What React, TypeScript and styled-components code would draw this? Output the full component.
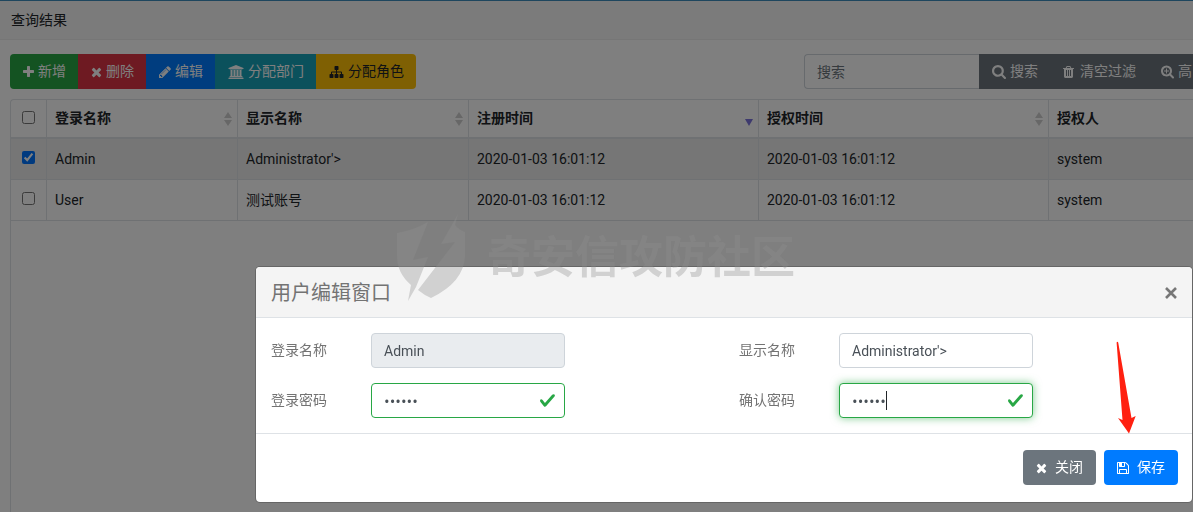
import React from "react";
import styled, { createGlobalStyle, css } from "styled-components";

const Global = createGlobalStyle`
  *, *::before, *::after { box-sizing: border-box; }
  html, body { margin: 0; height: 100%; }
  #root { height: 100%; }
  body, button, input {
    font-family: Roboto, "Noto Sans CJK SC", sans-serif;
    font-size: 14px;
    line-height: 21px;
  }
  body { color: #212529; background: #fff; overflow: hidden; }
`;

const ICONS = {
  plus: "M1600 736v192q0 40-28 68t-68 28h-416v416q0 40-28 68t-68 28h-192q-40 0-68-28t-28-68v-416h-416q-40 0-68-28t-28-68v-192q0-40 28-68t68-28h416v-416q0-40 28-68t68-28h192q40 0 68 28t28 68v416h416q40 0 68 28t28 68z",
  times: "M1490 1322q0 40-28 68l-136 136q-28 28-68 28t-68-28l-294-294-294 294q-28 28-68 28t-68-28l-136-136q-28-28-28-68t28-68l294-294-294-294q-28-28-28-68t28-68l136-136q28-28 68-28t68 28l294 294 294-294q28-28 68-28t68 28l136 136q28 28 28 68t-28 68l-294 294 294 294q28 28 28 68z",
  pencil: "M491 1536l91-91-235-235-91 91v107h128v128h107zm523-928q0-22-22-22-10 0-17 7l-542 542q-7 7-7 17 0 22 22 22 10 0 17-7l542-542q7-7 7-17zm-54-192l416 416-832 832h-416v-416zm683 96q0 53-37 90l-166 166-416-416 166-165q36-38 90-38 53 0 91 38l235 234q37 39 37 91z",
  university: "M960 0l960 384v128h-128q0 26-20.5 45t-48.5 19h-1526q-28 0-48.5-19t-20.5-45h-128v-128zm-704 640h256v768h128v-768h256v768h128v-768h256v768h128v-768h256v768h59q28 0 48.5 19t20.5 45v64h-1664v-64q0-26 20.5-45t48.5-19h59v-768zm1595 960q28 0 48.5 19t20.5 45v128h-1920v-128q0-26 20.5-45t48.5-19h1782z",
  sitemap: "M1792 1248v320q0 40-28 68t-68 28h-320q-40 0-68-28t-28-68v-320q0-40 28-68t68-28h96v-192h-512v192h96q40 0 68 28t28 68v320q0 40-28 68t-68 28h-320q-40 0-68-28t-28-68v-320q0-40 28-68t68-28h96v-192h-512v192h96q40 0 68 28t28 68v320q0 40-28 68t-68 28h-320q-40 0-68-28t-28-68v-320q0-40 28-68t68-28h96v-192q0-52 38-90t90-38h512v-192h-96q-40 0-68-28t-28-68v-320q0-40 28-68t68-28h320q40 0 68 28t28 68v320q0 40-28 68t-68 28h-96v192h512q52 0 90 38t38 90v192h96q40 0 68 28t28 68z",
  search: "M1216 832q0-185-131.5-316.5t-316.5-131.5-316.5 131.5-131.5 316.5 131.5 316.5 316.5 131.5 316.5-131.5 131.5-316.5zm512 832q0 52-38 90t-90 38q-54 0-90-38l-343-342q-179 124-399 124-143 0-273.5-55.5t-225-150-150-225-55.5-273.5 55.5-273.5 150-225 225-150 273.5-55.5 273.5 55.5 225 150 150 225 55.5 273.5q0 220-124 399l343 343q37 37 37 90z",
  zoomIn: "M1088 800v64q0 13-9.5 22.5t-22.5 9.5h-224v224q0 13-9.5 22.5t-22.5 9.5h-64q-13 0-22.5-9.5t-9.5-22.5v-224h-224q-13 0-22.5-9.5t-9.5-22.5v-64q0-13 9.5-22.5t22.5-9.5h224v-224q0-13 9.5-22.5t22.5-9.5h64q13 0 22.5 9.5t9.5 22.5v224h224q13 0 22.5 9.5t9.5 22.5z M1216 832q0-185-131.5-316.5t-316.5-131.5-316.5 131.5-131.5 316.5 131.5 316.5 316.5 131.5 316.5-131.5 131.5-316.5zm512 832q0 52-38 90t-90 38q-54 0-90-38l-343-342q-179 124-399 124-143 0-273.5-55.5t-225-150-150-225-55.5-273.5 55.5-273.5 150-225 225-150 273.5-55.5 273.5 55.5 225 150 150 225 55.5 273.5q0 220-124 399l343 343q37 37 37 90z",
  trash: "M704 1376v-704q0-14-9-23t-23-9h-64q-14 0-23 9t-9 23v704q0 14 9 23t23 9h64q14 0 23-9t9-23zm256 0v-704q0-14-9-23t-23-9h-64q-14 0-23 9t-9 23v704q0 14 9 23t23 9h64q14 0 23-9t9-23zm256 0v-704q0-14-9-23t-23-9h-64q-14 0-23 9t-9 23v704q0 14 9 23t23 9h64q14 0 23-9t9-23zm-544-992h448l-48-117q-7-9-17-11h-317q-10 2-17 11zm928 32v64q0 14-9 23t-23 9h-96v948q0 83-47 143.5t-113 60.5h-832q-66 0-113-58.5t-47-141.5v-952h-96q-14 0-23-9t-9-23v-64q0-14 9-23t23-9h309l70-167q15-37 54-63t79-26h320q40 0 79 26t54 63l70 167h309q14 0 23 9t9 23z",
  save: "M512 1536h768v-384h-768v384zm896 0h128v-896q0-14-10-38.5t-20-34.5l-281-281q-10-10-34-20t-39-10v416q0 40-28 68t-68 28h-576q-40 0-68-28t-28-68v-416h-128v1280h128v-416q0-40 28-68t68-28h832q40 0 68 28t28 68v416zm-384-928v-320q0-13-9.5-22.5t-22.5-9.5h-192q-13 0-22.5 9.5t-9.5 22.5v320q0 13 9.5 22.5t22.5 9.5h192q13 0 22.5-9.5t9.5-22.5zm640 32v928q0 40-28 68t-68 28h-1344q-40 0-68-28t-28-68v-1344q0-40 28-68t68-28h928q40 0 88 20t76 48l280 280q28 28 48 76t20 88z",
};

const VIEW_BOXES: Partial<Record<keyof typeof ICONS, string>> = {
  plus: "192 0 1408 1792",
  times: "302 0 1188 1792",
  pencil: "128 0 1536 1792",
  university: "0 0 1920 1792",
  search: "64 128 1664 1664",
  zoomIn: "64 128 1664 1664",
  trash: "192 0 1408 1792",
  save: "128 0 1536 1792",
};

const Glyph = styled.svg`
  display: block;
  flex: none;
  height: 14px;
  fill: currentColor;
`;

function Icon({ name, width = 14 }: { name: keyof typeof ICONS; width?: number }) {
  return (
    <Glyph viewBox={VIEW_BOXES[name] ?? "0 0 1792 1792"} width={width} aria-hidden="true">
      <path d={ICONS[name]} />
    </Glyph>
  );
}

const Page = styled.main`
  display: flex;
  flex-direction: column;
  min-height: 100%;
  border-top: 1px solid #3c8dbc;
`;

const PanelHeader = styled.h1`
  margin: 0;
  padding: 9px 11px 8px;
  font-size: 14px;
  font-weight: 400;
  background: #f7f7f7;
  border-bottom: 1px solid #ececec;
`;

const PanelBody = styled.section`
  display: flex;
  flex: 1;
  flex-direction: column;
  gap: 10px;
  padding: 14px 0 0 10px;
`;

const Toolbar = styled.div`
  display: flex;
  justify-content: space-between;
`;

const Group = styled.div`
  display: flex;
  flex: none;
  border-radius: 4px;
  overflow: hidden;
`;

const SearchGroup = styled.form`
  display: flex;
  flex: none;
  width: 389px;
  overflow: hidden;
`;

const tones = {
  success: "#28a745",
  danger: "#dc3545",
  primary: "#007bff",
  info: "#17a2b8",
  warning: "#ffc107",
  secondary: "#6c757d",
};

const Button = styled.button<{ $tone: keyof typeof tones; $gap?: number; $round?: boolean }>`
  display: flex;
  flex: none;
  align-items: center;
  gap: ${(p) => p.$gap ?? 4}px;
  height: 35px;
  padding: 0 ${(p) => (p.$round ? 13 : 12)}px 0 13px;
  border: 0;
  border-radius: ${(p) => (p.$round ? 4 : 0)}px;
  color: ${(p) => (p.$tone === "warning" ? "#212529" : "#fff")};
  background: ${(p) => tones[p.$tone]};
  white-space: nowrap;
`;

const fieldBase = css`
  height: 35px;
  padding: 6px 12px;
  border: 1px solid #ced4da;
  border-radius: 4px;
  color: #495057;
  background: #fff;
  outline: 0;
`;

const SearchInput = styled.input`
  ${fieldBase}
  flex: none;
  width: 175px;
  border-right: 0;
  border-radius: 4px 0 0 4px;
  &::placeholder { color: #6c757d; opacity: 1; }
`;

const TableFrame = styled.div`
  flex: 1;
  border: 1px solid #dee2e6;
  border-right: 0;
  border-bottom: 0;
  border-radius: 4px 0 0 0;
`;

const Table = styled.table`
  width: 100%;
  table-layout: fixed;
  border-collapse: separate;
  border-spacing: 0;
`;

const Column = styled.col<{ $width?: number }>`
  width: ${(p) => (p.$width ? `${p.$width}px` : "auto")};
`;

const cell = css`
  padding: 0 8px;
  border-right: 1px solid #dee2e6;
  border-bottom: 1px solid #dee2e6;
  text-align: left;
  white-space: nowrap;
  &:last-child { border-right: 0; }
`;

const Th = styled.th`
  ${cell}
  height: 39px;
  border-bottom-width: 2px;
  font-weight: 700;
`;

const ThInner = styled.div`
  display: flex;
  align-items: center;
  justify-content: space-between;
  margin-right: -4px;
`;

const Td = styled.td`
  ${cell}
  height: 41px;
`;

const Row = styled.tr<{ $selected?: boolean }>`
  background: ${(p) => (p.$selected ? "#ececec" : "transparent")};
`;

const Check = styled.input`
  display: block;
  width: 13px;
  height: 13px;
  margin: 0 0 3px 3px;
`;

const SortMark = styled.svg`
  display: block;
  width: 10px;
  height: 16px;
`;

function Sort({ active }: { active?: boolean }) {
  return (
    <SortMark viewBox="0 0 10 16" aria-hidden="true">
      {active ? (
        <path d="M1 8h8L5 15z" fill="#7c74dc" />
      ) : (
        <path d="M1 7h8L5 1z M1 9h8L5 15z" fill="#cfcfcf" />
      )}
    </SortMark>
  );
}

const Backdrop = styled.div`
  position: fixed;
  inset: 0;
  padding: 266px 0 0 255px;
  background: rgba(0, 0, 0, 0.5);
`;

const Dialog = styled.section`
  display: flex;
  flex-direction: column;
  border: 1px solid rgba(0, 0, 0, 0.2);
  border-radius: 5px;
  background: #fff;
  background-clip: padding-box;
  color: #737373;
`;

const DialogHeader = styled.header`
  display: flex;
  align-items: center;
  justify-content: space-between;
  height: 51px;
  padding: 1px 14px 0 15px;
  border-bottom: 1px solid #dee2e6;
  border-radius: 4px 4px 0 0;
  background: #f4f4f4;
`;

const DialogTitle = styled.h2`
  margin: 0;
  font-size: 20px;
  line-height: 30px;
  font-weight: 400;
`;

const CloseButton = styled.button`
  display: flex;
  padding: 1px;
  border: 0;
  color: #777;
  background: none;
`;

const FormGrid = styled.form`
  display: grid;
  grid-template-columns: 1fr 1fr;
  row-gap: 15px;
  padding: 15px 0;
`;

const Field = styled.div`
  display: grid;
  grid-template-columns: 100px 194px;
  align-items: center;
  padding-left: 15px;
`;

const Control = styled.span`
  position: relative;
  display: flex;
`;

const Input = styled.input<{ $valid?: boolean; $focused?: boolean }>`
  ${fieldBase}
  width: 100%;
  &:disabled { background: #e9ecef; }
  &[type="password"] {
    font-family: "Open Sans", sans-serif;
    font-size: 15px;
  }
  ${(p) => p.$valid && css`border-color: #28a745;`}
  ${(p) => p.$focused && css`box-shadow: 0 0 8px rgba(40, 167, 69, 0.6);`}
`;

const ValidMark = styled.svg`
  position: absolute;
  top: 9px;
  right: 9px;
  width: 17px;
  height: 17px;
`;

const Caret = styled.i`
  position: absolute;
  top: 8px;
  left: 47px;
  width: 1px;
  height: 19px;
  background: #212529;
`;

const DialogFooter = styled.footer`
  display: flex;
  justify-content: flex-end;
  gap: 8px;
  padding: 16px 14px 17px;
  border-top: 1px solid #dee2e6;
`;

const Watermark = styled.div`
  position: fixed;
  top: 214px;
  left: 396px;
  display: flex;
  align-items: center;
  gap: 21px;
  color: rgba(142, 142, 142, 0.35);
  font-size: 44px;
  line-height: 60px;
  font-weight: 700;
  pointer-events: none;
`;

const Arrow = styled.svg`
  position: fixed;
  top: 341px;
  right: 57px;
  width: 22px;
  height: 93px;
  pointer-events: none;
`;

const rows = [
  { login: "Admin", name: "Administrator'>", created: "2020-01-03 16:01:12", granted: "2020-01-03 16:01:12", by: "system", selected: true },
  { login: "User", name: "测试账号", created: "2020-01-03 16:01:12", granted: "2020-01-03 16:01:12", by: "system", selected: false },
];

const fields = [
  { id: "login", label: "登录名称", value: "Admin", disabled: true },
  { id: "display", label: "显示名称", value: "Administrator'>" },
  { id: "password", label: "登录密码", value: "123456", secret: true },
  { id: "confirm", label: "确认密码", value: "123456", secret: true, focused: true },
];

export default function App() {
  return (
    <>
      <Global />
      <Page>
        <PanelHeader>查询结果</PanelHeader>
        <PanelBody>
          <Toolbar>
            <Group>
              <Button $tone="success"><Icon name="plus" width={11} />新增</Button>
              <Button $tone="danger"><Icon name="times" width={11} />删除</Button>
              <Button $tone="primary"><Icon name="pencil" width={12} />编辑</Button>
              <Button $tone="info"><Icon name="university" width={16} />分配部门</Button>
              <Button $tone="warning"><Icon name="sitemap" width={15} />分配角色</Button>
            </Group>
            <SearchGroup onSubmit={(e) => e.preventDefault()}>
              <SearchInput placeholder="搜索" aria-label="搜索" />
              <Button $tone="secondary"><Icon name="search" />搜索</Button>
              <Button $tone="secondary" type="button" $gap={6}><Icon name="trash" width={11} />清空过滤</Button>
              <Button $tone="secondary" type="button"><Icon name="zoomIn" width={13} />高</Button>
            </SearchGroup>
          </Toolbar>
          <TableFrame>
            <Table>
              <colgroup>
                <Column $width={36} />
                <Column $width={191} />
                <Column $width={231} />
                <Column $width={290} />
                <Column $width={290} />
                <Column />
              </colgroup>
              <thead>
                <tr>
                  <Th><Check type="checkbox" aria-label="全选" /></Th>
                  <Th><ThInner>登录名称<Sort /></ThInner></Th>
                  <Th><ThInner>显示名称<Sort /></ThInner></Th>
                  <Th><ThInner>注册时间<Sort active /></ThInner></Th>
                  <Th><ThInner>授权时间<Sort /></ThInner></Th>
                  <Th>授权人</Th>
                </tr>
              </thead>
              <tbody>
                {rows.map((r) => (
                  <Row key={r.login} $selected={r.selected}>
                    <Td><Check type="checkbox" defaultChecked={r.selected} aria-label={r.login} /></Td>
                    <Td>{r.login}</Td>
                    <Td>{r.name}</Td>
                    <Td>{r.created}</Td>
                    <Td>{r.granted}</Td>
                    <Td>{r.by}</Td>
                  </Row>
                ))}
              </tbody>
            </Table>
          </TableFrame>
        </PanelBody>
      </Page>
      <Backdrop>
        <Dialog role="dialog" aria-labelledby="dialog-title">
          <DialogHeader>
            <DialogTitle id="dialog-title">用户编辑窗口</DialogTitle>
            <CloseButton aria-label="关闭">
              <svg width="12" height="12" viewBox="0 0 12 12" aria-hidden="true">
                <path d="M1 1l10 10M11 1L1 11" stroke="currentColor" strokeWidth="2.6" />
              </svg>
            </CloseButton>
          </DialogHeader>
          <FormGrid id="user-form" onSubmit={(e) => e.preventDefault()}>
            {fields.map((f) => (
              <Field key={f.id}>
                <label htmlFor={f.id}>{f.label}</label>
                <Control>
                  <Input
                    id={f.id}
                    type={f.secret ? "password" : "text"}
                    autoComplete="off"
                    defaultValue={f.value}
                    disabled={f.disabled}
                    $valid={f.secret}
                    $focused={f.focused}
                  />
                  {f.secret && (
                    <ValidMark viewBox="0 0 8 8" aria-hidden="true">
                      <path fill="#28a745" d="M2.3 6.73L.6 4.53c-.4-1.04.46-1.4 1.1-.8l1.1 1.4 3.4-3.8c.6-.63 1.6-.27 1.2.7l-4 4.6c-.43.5-.8.4-1.1.1z" />
                    </ValidMark>
                  )}
                  {f.focused && <Caret />}
                </Control>
              </Field>
            ))}
          </FormGrid>
          <DialogFooter>
            <Button $tone="secondary" $gap={8} $round type="button"><Icon name="times" width={11} />关闭</Button>
            <Button $tone="primary" $gap={8} $round form="user-form"><Icon name="save" width={12} />保存</Button>
          </DialogFooter>
        </Dialog>
      </Backdrop>
      <Watermark>
        <svg width="70" height="88" viewBox="0 -4 70 88" fill="currentColor" aria-hidden="true">
          <path d="M1 15Q18 12 32 4L17 42L32 39L20 69L12 83L15 67Q1 55 1 38z" />
          <path d="M62 -4L59 7Q63 12 69 14V38Q68 64 35 80Q28 77 22 72L59 24L45 26z" />
        </svg>
        <span>奇安信攻防社区</span>
      </Watermark>
      <Arrow viewBox="0 0 22 93" aria-hidden="true">
        <path d="M2.6 1.5Q3.5 0 4.2 1.5L17.5 77L21.7 75L15 92.5L4 77L8.5 79z" fill="#ff2010" />
      </Arrow>
    </>
  );
}
